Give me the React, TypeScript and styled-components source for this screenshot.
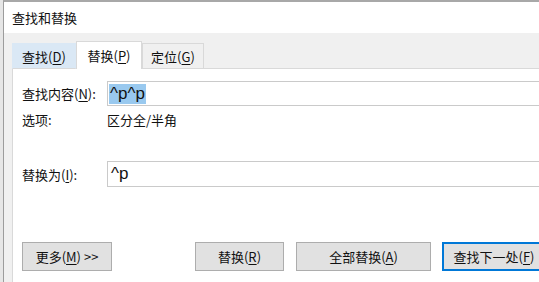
import React from "react";
import styled, { createGlobalStyle } from "styled-components";

const GlobalStyle = createGlobalStyle`
  html, body {
    margin: 0;
    padding: 0;
    background: #e9e9e9;
    overflow: hidden;
  }
  body {
    font-family: "Noto Sans CJK SC", "Noto Sans", sans-serif;
    color: #111111;
  }
`;

const Screen = styled.div`
  width: 539px;
  height: 282px;
  overflow: hidden;
  padding-left: 3px;
  box-sizing: border-box;
  background: #e6e6e6;
`;

const Dialog = styled.div`
  width: 566px;
  box-sizing: border-box;
  height: 300px;
  border-left: 1px solid #9c9c9c;
  border-top: 2px solid #a8a8a8;
  background: #f0f0f0;
  display: flex;
  flex-direction: column;
`;

const TitleBar = styled.div`
  height: 31px;
  background: #ffffff;
  display: flex;
  align-items: center;
  padding-left: 8px;
  font-size: 13px;
`;

const Body = styled.div`
  flex: 1;
  display: flex;
  flex-direction: column;
  padding: 8px 12px 0 8px;
`;

const Tabs = styled.div`
  display: flex;
  align-items: flex-end;
  height: 28px;
  position: relative;
  z-index: 1;
  margin-bottom: -1px;
`;

const Tab = styled.div<{ $state: "hover" | "active" | "idle"; $w: number }>`
  width: ${(p) => p.$w}px;
  height: ${(p) => (p.$state === "active" ? 28 : 26)}px;
  box-sizing: border-box;
  display: flex;
  align-items: center;
  justify-content: center;
  font-size: 13px;
  border: 1px solid ${(p) => (p.$state === "hover" ? "#dae8f5" : "#d9d9d9")};
  border-bottom: ${(p) => (p.$state === "active" ? "none" : "1px solid #d9d9d9")};
  background: ${(p) =>
    p.$state === "hover" ? "#dae8f5" : p.$state === "active" ? "#ffffff" : "#f0f0f0"};
`;

const Key = styled.span`
  text-decoration: underline;
  text-underline-offset: 2px;
`;

const Panel = styled.div`
  flex: 1;
  background: #ffffff;
  border: 1px solid #d9d9d9;
  padding: 12px 10px 0 9px;
  display: flex;
  flex-direction: column;
`;

const FieldRow = styled.div<{ $top: number }>`
  display: grid;
  grid-template-columns: 85px 1fr;
  align-items: center;
  margin-top: ${(p) => p.$top}px;
  font-size: 13px;
`;

const Input = styled.div<{ $h: number }>`
  height: ${(p) => p.$h}px;
  box-sizing: border-box;
  border: 1px solid #cacaca;
  display: flex;
  align-items: center;
  padding-left: 1px;
  font-family: "Liberation Sans", Arial, sans-serif;
  font-size: 17px;
`;

const Selected = styled.span`
  background: #99c9ef;
  height: 20px;
  line-height: 20px;
  padding: 0 1px;
`;

const Plain = styled.span`
  padding-left: 2px;
`;

const ButtonRow = styled.div`
  display: flex;
  align-items: center;
  margin-top: 55px;
`;

const Spacer = styled.div`
  flex: 1;
`;

const Button = styled.div<{ $w: number; $focus?: boolean }>`
  width: ${(p) => p.$w}px;
  height: 29px;
  box-sizing: border-box;
  margin-left: ${(p) => (p.$focus ? 11 : 12)}px;
  background: #e1e1e1;
  border: ${(p) => (p.$focus ? "2px solid #0078d7" : "1px solid #adadad")};
  display: flex;
  align-items: center;
  justify-content: center;
  font-size: 13px;
  &:first-child {
    margin-left: 0;
  }
`;

export default function App() {
  return (
    <>
      <GlobalStyle />
      <Screen>
        <Dialog>
          <TitleBar>查找和替换</TitleBar>
          <Body>
            <Tabs>
              <Tab $state="hover" $w={64}>
                查找(<Key>D</Key>)
              </Tab>
              <Tab $state="active" $w={66}>
                替换(<Key>P</Key>)
              </Tab>
              <Tab $state="idle" $w={62}>
                定位(<Key>G</Key>)
              </Tab>
            </Tabs>
            <Panel>
              <FieldRow $top={0}>
                <span>
                  查找内容(<Key>N</Key>):
                </span>
                <Input $h={25}>
                  <Selected>^p^p</Selected>
                </Input>
              </FieldRow>
              <FieldRow $top={4}>
                <span>选项:</span>
                <span>区分全/半角</span>
              </FieldRow>
              <FieldRow $top={32}>
                <span>
                  替换为(<Key>I</Key>):
                </span>
                <Input $h={26}>
                  <Plain>^p</Plain>
                </Input>
              </FieldRow>
              <ButtonRow>
                <Button $w={90}>
                  更多(<Key>M</Key>) &gt;&gt;
                </Button>
                <Spacer />
                <Button $w={89}>
                  替换(<Key>R</Key>)
                </Button>
                <Button $w={135}>
                  全部替换(<Key>A</Key>)
                </Button>
                <Button $w={104} $focus>
                  查找下一处(<Key>F</Key>)
                </Button>
              </ButtonRow>
            </Panel>
          </Body>
        </Dialog>
      </Screen>
    </>
  );
}
